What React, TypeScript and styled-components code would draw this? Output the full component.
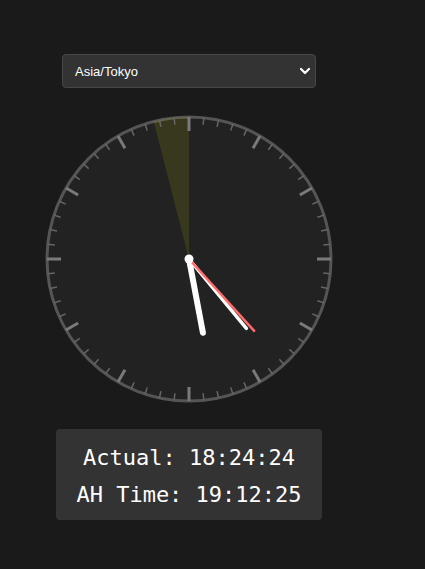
import React from "react";
import styled, { createGlobalStyle } from "styled-components";

const Global = createGlobalStyle`
  html, body { margin: 0; padding: 0; background: #1a1a1a; }
  body { font-family: "Liberation Sans", Arial, sans-serif; }
`;

const Page = styled.div`
  width: 378px;
  padding-top: 54px;
  display: flex;
  flex-direction: column;
  align-items: center;
`;

const SelectWrap = styled.div`
  position: relative;
  width: 254px;
  height: 34px;
`;

const Select = styled.select`
  appearance: none;
  -webkit-appearance: none;
  width: 100%;
  height: 100%;
  box-sizing: border-box;
  background: #333333;
  border: 1px solid #474747;
  border-radius: 4px;
  color: #ffffff;
  font-family: "Liberation Sans", Arial, sans-serif;
  font-size: 13px;
  padding: 0 28px 0 12px;
  outline: none;
`;

const Chevron = styled.svg`
  position: absolute;
  right: 5px;
  top: 12px;
  pointer-events: none;
`;

const ClockSvg = styled.svg`
  display: block;
  margin-top: 26px;
  width: 290px;
  height: 290px;
`;

const Readout = styled.div`
  margin-top: 25px;
  background: #333333;
  border-radius: 4px;
  padding: 10px 20px 7px;
  font-family: "DejaVu Sans Mono", "Liberation Mono", monospace;
  font-size: 22px;
  color: #ffffff;
  text-align: center;
`;

const Line = styled.div`
  line-height: 37px;
  white-space: pre;
`;

const C = 145;

function polar(angleDeg: number, r: number) {
  const a = (angleDeg * Math.PI) / 180;
  return { x: C + r * Math.sin(a), y: C - r * Math.cos(a) };
}

function Clock() {
  const ticks = Array.from({ length: 60 }, (_, i) => {
    const major = i % 5 === 0;
    const a = i * 6;
    const p1 = polar(a, major ? 128 : 135);
    const p2 = polar(a, 142);
    return (
      <line
        key={i}
        x1={p1.x}
        y1={p1.y}
        x2={p2.x}
        y2={p2.y}
        stroke={major ? "#7a7a7a" : "#666666"}
        strokeWidth={major ? 3 : 1.5}
      />
    );
  });

  const wStart = polar(-14.4, 142);
  const wedge = `M ${C} ${C} L ${wStart.x} ${wStart.y} A 142 142 0 0 1 ${C} ${C - 142} Z`;

  const hour = polar(169.3, 75);
  const minute = polar(140.4, 90);
  const second = polar(137.8, 98);

  return (
    <ClockSvg viewBox="0 0 290 290">
      <circle cx={C} cy={C} r={142} fill="#222222" stroke="#555555" strokeWidth={3} />
      <path d={wedge} fill="rgba(255,255,0,0.1)" />
      {ticks}
      <line x1={C} y1={C} x2={hour.x} y2={hour.y} stroke="#ffffff" strokeWidth={6} strokeLinecap="round" />
      <line x1={C} y1={C} x2={minute.x} y2={minute.y} stroke="#ffffff" strokeWidth={3.5} strokeLinecap="round" />
      <line x1={C} y1={C} x2={second.x} y2={second.y} stroke="#ff6b6b" strokeWidth={2.5} />
      <circle cx={C} cy={C} r={4.5} fill="#ffffff" />
    </ClockSvg>
  );
}

export default function App() {
  return (
    <>
      <Global />
      <Page>
        <SelectWrap>
          <Select defaultValue="Asia/Tokyo">
            <option value="Asia/Tokyo">Asia/Tokyo</option>
            <option value="UTC">UTC</option>
          </Select>
          <Chevron width="12" height="10" viewBox="0 0 12 10">
            <path d="M2 3 L6 7 L10 3" fill="none" stroke="#ffffff" strokeWidth="2.2" strokeLinecap="round" strokeLinejoin="round" />
          </Chevron>
        </SelectWrap>
        <Clock />
        <Readout>
          <Line>Actual: 18:24:24</Line>
          <Line>AH Time: 19:12:25</Line>
        </Readout>
      </Page>
    </>
  );
}
